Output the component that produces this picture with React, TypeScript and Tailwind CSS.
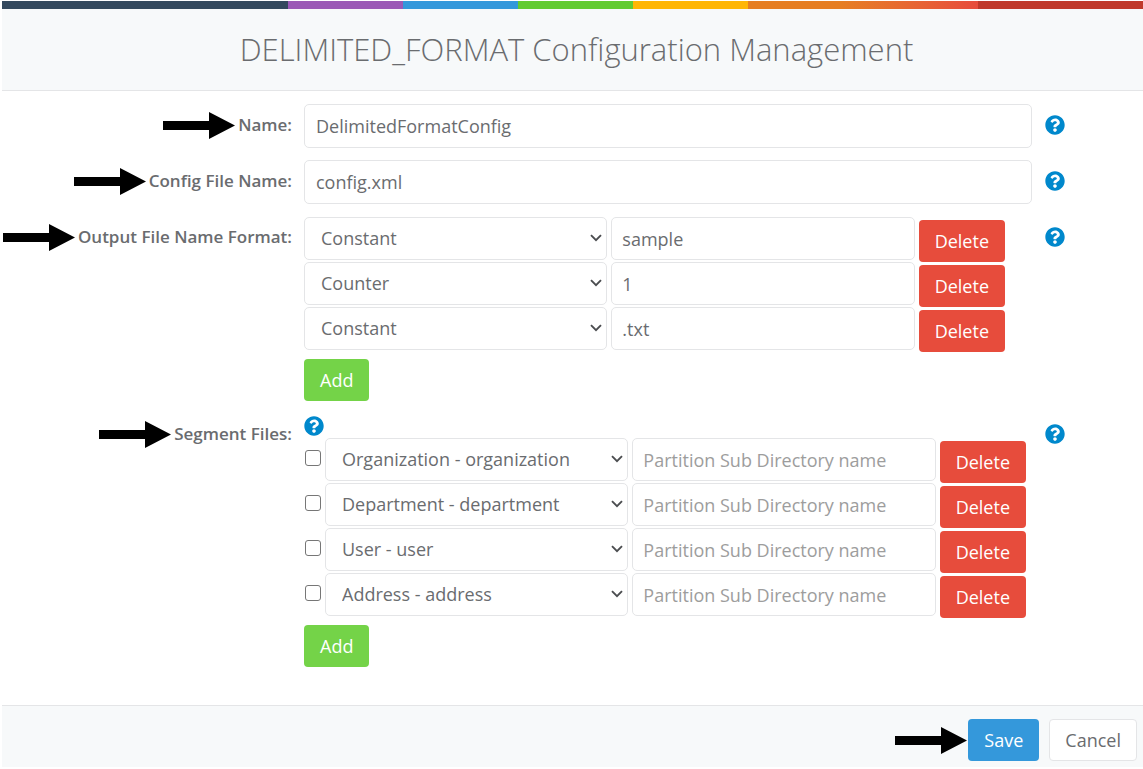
import { useId, useState, type ReactNode } from "react";
import { FaQuestionCircle } from "react-icons/fa";

const fieldClass =
  "rounded-[5px] border border-[#e4e5e7] bg-white text-[18px] text-[#6a6c6f] outline-none placeholder:text-[#9d9d9d] focus:border-[#3498db]";

function Pointer() {
  return (
    <svg className="h-[27px] w-[72px] shrink-0" viewBox="0 0 72 27" aria-hidden="true">
      <path d="M0 9H46V0L72 13.5L46 27V18H0Z" fill="#000" />
    </svg>
  );
}

function Help({ topic }: { topic: string }) {
  return (
    <button type="button" aria-label={`Help: ${topic}`} className="block text-[#0088cc]">
      <FaQuestionCircle className="size-5" />
    </button>
  );
}

function FormRow({ label, htmlFor, children }: { label: string; htmlFor?: string; children: ReactNode }) {
  const textClass = "whitespace-nowrap text-[17px] leading-6 font-semibold";
  return (
    <div className="grid grid-cols-[minmax(0,302fr)_minmax(0,728fr)_minmax(0,111fr)]">
      <div className="flex h-[42px] items-center justify-end gap-[3px] pr-3">
        <Pointer />
        {htmlFor ? (
          <label htmlFor={htmlFor} className={textClass}>{label}:</label>
        ) : (
          <span className={textClass}>{label}:</span>
        )}
      </div>
      <div>{children}</div>
      <div className="flex h-[42px] items-center pl-[13px]">
        <Help topic={label} />
      </div>
    </div>
  );
}

function Select({ label, value, options }: { label: string; value: string; options: string[] }) {
  return (
    <div className="relative w-5/12">
      <select aria-label={label} defaultValue={value} className={`${fieldClass} h-[43px] w-full appearance-none pr-8 pl-4`}>
        {options.map((option) => (
          <option key={option}>{option}</option>
        ))}
      </select>
      <svg className="pointer-events-none absolute top-[17px] right-[5px] h-2 w-3" viewBox="0 0 12 8" aria-hidden="true">
        <path d="M1 1.2L6 6.2L11 1.2" fill="none" stroke="#4b4d50" strokeWidth="1.9" />
      </svg>
    </div>
  );
}

function DeleteButton({ onClick }: { onClick: () => void }) {
  return (
    <button type="button" onClick={onClick} className="h-[42px] self-end rounded bg-[#e74c3c] px-4 text-[18px] text-white">
      Delete
    </button>
  );
}

function AddButton({ onClick }: { onClick: () => void }) {
  return (
    <button type="button" onClick={onClick} className="mt-[7px] block h-[42px] rounded bg-[#74d348] px-4 text-[18px] text-white">
      Add
    </button>
  );
}

const segmentOptions = [
  "Organization - organization",
  "Department - department",
  "User - user",
  "Address - address",
];

const stripes = [
  "grow-[286] bg-[#34495e]",
  "grow-[115] bg-[#9b59b6]",
  "grow-[115] bg-[#3498db]",
  "grow-[115] bg-[#62cb31]",
  "grow-[115] bg-[#ffb606]",
  "grow-[230] bg-linear-to-r from-[#e67e22] from-40% to-[#e74c3c]",
  "grow-[165] bg-[#c0392b]",
];

export default function App() {
  const id = useId();
  const [parts, setParts] = useState([
    { key: 1, type: "Constant", value: "sample" },
    { key: 2, type: "Counter", value: "1" },
    { key: 3, type: "Constant", value: ".txt" },
  ]);
  const [segments, setSegments] = useState(segmentOptions.map((name, key) => ({ key, name })));

  return (
    <form
      onSubmit={(event) => event.preventDefault()}
      className="bg-white pt-px pl-[2px] font-['Open_Sans',sans-serif] text-[#6a6c6f]"
    >
      <div className="flex h-2">
        {stripes.map((stripe) => (
          <div key={stripe} className={stripe} />
        ))}
      </div>
      <header className="border-b border-[#e4e5e7] bg-[#f7f9fa] py-5 pl-2 text-center">
        <h1 className="text-[31px] leading-[41px] font-light">DELIMITED_FORMAT Configuration Management</h1>
      </header>

      <main className="flex flex-col gap-3 pt-[13px] pb-[38px]">
        <FormRow label="Name" htmlFor={`${id}-name`}>
          <input id={`${id}-name`} defaultValue="DelimitedFormatConfig" className={`${fieldClass} block h-11 w-full px-[11px]`} />
        </FormRow>
        <FormRow label="Config File Name" htmlFor={`${id}-file`}>
          <input id={`${id}-file`} defaultValue="config.xml" className={`${fieldClass} block h-11 w-full px-[11px]`} />
        </FormRow>

        <FormRow label="Output File Name Format">
          <div className="pt-px">
            {parts.map((part) => (
              <div key={part.key} className="flex h-[45px] gap-1">
                <Select label="Part type" value={part.type} options={["Constant", "Counter"]} />
                <input aria-label="Part value" defaultValue={part.value} className={`${fieldClass} h-[43px] w-5/12 px-[10px]`} />
                <DeleteButton onClick={() => setParts(parts.filter((p) => p !== part))} />
              </div>
            ))}
          </div>
          <AddButton onClick={() => setParts([...parts, { key: Date.now(), type: "Constant", value: "" }])} />
        </FormRow>

        <FormRow label="Segment Files">
          <div className="flex h-[25px] items-center">
            <Help topic="Segment selection" />
          </div>
          {segments.map((segment) => (
            <div key={segment.key} className="flex h-[45px] gap-1">
              <input
                type="checkbox"
                aria-label={segment.name}
                className="mt-3 ml-px size-4 shrink-0 appearance-none rounded-[3px] border border-[#767676] bg-white checked:bg-[#3498db]"
              />
              <Select label="Segment" value={segment.name} options={segmentOptions} />
              <input aria-label="Partition sub directory" placeholder="Partition Sub Directory name" className={`${fieldClass} h-[43px] w-5/12 px-[10px]`} />
              <DeleteButton onClick={() => setSegments(segments.filter((s) => s !== segment))} />
            </div>
          ))}
          <AddButton onClick={() => setSegments([...segments, { key: Date.now(), name: segmentOptions[0] }])} />
        </FormRow>
      </main>

      <footer className="flex items-center justify-end border-t border-[#e4e5e7] bg-[#f7f9fa] pt-[13px] pr-[6px] pb-[6px]">
        <Pointer />
        <button type="submit" className="ml-px h-[42px] rounded bg-[#3498db] px-4 text-[18px] text-white">Save</button>
        <button type="button" className="ml-[10px] h-[42px] rounded border border-[#e4e5e7] bg-white px-[15px] text-[18px]">Cancel</button>
      </footer>
    </form>
  );
}
